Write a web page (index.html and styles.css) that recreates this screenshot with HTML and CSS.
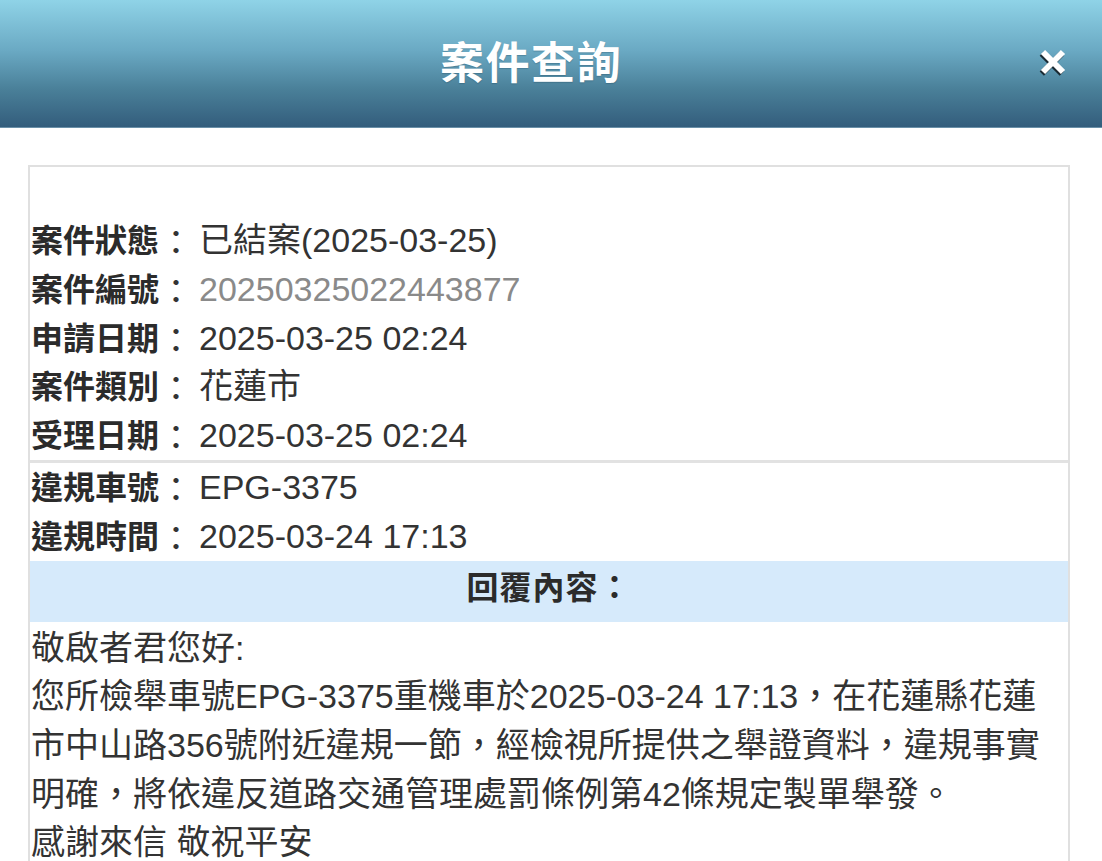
FILE: index.html
```html
<!DOCTYPE html>
<html lang="zh-Hant">
<head>
<meta charset="utf-8">
<title>案件查詢</title>
<link rel="stylesheet" href="styles.css">
</head>
<body>
<header class="topbar">
  <h1 class="title">案件查詢</h1>
  <button class="close" aria-label="關閉">
    <svg width="30" height="30" viewBox="0 0 30 30">
      <g class="x-shadow" transform="translate(-1.2,1.6)">
        <path d="M5 5 L25 25 M25 5 L5 25" />
      </g>
      <g class="x-main">
        <path d="M5 5 L25 25 M25 5 L5 25" />
      </g>
    </svg>
  </button>
</header>
<main class="page">
  <section class="card">
    <div class="spacer"></div>
    <div class="group">
      <div class="row"><span class="k">案件狀態</span><span class="c">：</span>已結案(2025-03-25)</div>
      <div class="row"><span class="k">案件編號</span><span class="c">：</span><span class="muted">20250325022443877</span></div>
      <div class="row"><span class="k">申請日期</span><span class="c">：</span>2025-03-25 02:24</div>
      <div class="row"><span class="k">案件類別</span><span class="c">：</span>花蓮市</div>
      <div class="row"><span class="k">受理日期</span><span class="c">：</span>2025-03-25 02:24</div>
    </div>
    <div class="sep"></div>
    <div class="group">
      <div class="row"><span class="k">違規車號</span><span class="c">：</span>EPG-3375</div>
      <div class="row"><span class="k">違規時間</span><span class="c">：</span>2025-03-24 17:13</div>
    </div>
    <div class="reply-head">回覆內容：</div>
    <div class="reply-body">
      <p>敬啟者君您好:</p>
      <p>您所檢舉車號EPG-3375重機車於2025-03-24 17:13，在花蓮縣花蓮市中山路356號附近違規一節，經檢視所提供之舉證資料，違規事實明確，將依違反道路交通管理處罰條例第42條規定製單舉發。</p>
      <p>感謝來信 敬祝平安</p>
    </div>
  </section>
</main>
</body>
</html>
```
FILE: styles.css
```css
html, body {
  margin: 0;
  padding: 0;
  background: #ffffff;
}
body {
  font-family: "Liberation Sans", "Noto Sans CJK TC", sans-serif;
  color: #333333;
  overflow: hidden;
}
.topbar {
  box-sizing: border-box;
  height: 128px;
  padding: 0 40px 8px 0;
  border-bottom: 1px solid #6a90a8;
  background: linear-gradient(to bottom, #8fd3e7 0%, #6aa9c3 40%, #4a8099 70%, #335d7c 100%);
  display: flex;
  align-items: center;
  justify-content: center;
  position: relative;
}
.title {
  margin: 0;
  font-family: "Noto Sans CJK TC", sans-serif;
  font-weight: 700;
  font-size: 44px;
  letter-spacing: 1.5px;
  color: #ffffff;
  text-shadow: 0 1px 1px rgba(20, 50, 70, 0.25);
}
.close {
  position: absolute;
  right: 34px;
  top: 47px;
  width: 30px;
  height: 30px;
  padding: 0;
  border: 0;
  background: none;
}
.close svg { display: block; }
.x-main path {
  stroke: #ffffff;
  stroke-width: 6;
  fill: none;
}
.x-shadow path {
  stroke: #1a2a33;
  stroke-width: 6;
  fill: none;
}
.page {
  padding: 37px 32px 0 28px;
}
.card {
  border: 2px solid #e0e0e0;
  border-bottom: 0;
  height: 760px;
}
.spacer {
  height: 49px;
}
.row {
  font-size: 34px;
  line-height: 48.8px;
  height: 48.8px;
  white-space: nowrap;
  padding-left: 1px;
}
.k {
  font-weight: 700;
  font-size: 32px;
  color: #2b2b2b;
}
.c {
  margin-right: 6px;
  vertical-align: -3px;
}
.muted {
  color: #8a8a8a;
}
.sep {
  height: 3px;
  background: #e2e2e2;
}
.reply-head {
  box-sizing: border-box;
  height: 61px;
  padding-bottom: 12px;
  background: #d6eafb;
  display: flex;
  align-items: center;
  justify-content: center;
  font-size: 32px;
  font-weight: 700;
  color: #2b2b2b;
  letter-spacing: 1px;
}
.reply-body {
  padding: 2px 0 0 1px;
  font-size: 34px;
  line-height: 48.7px;
}
.reply-body p {
  margin: 0;
}
```
